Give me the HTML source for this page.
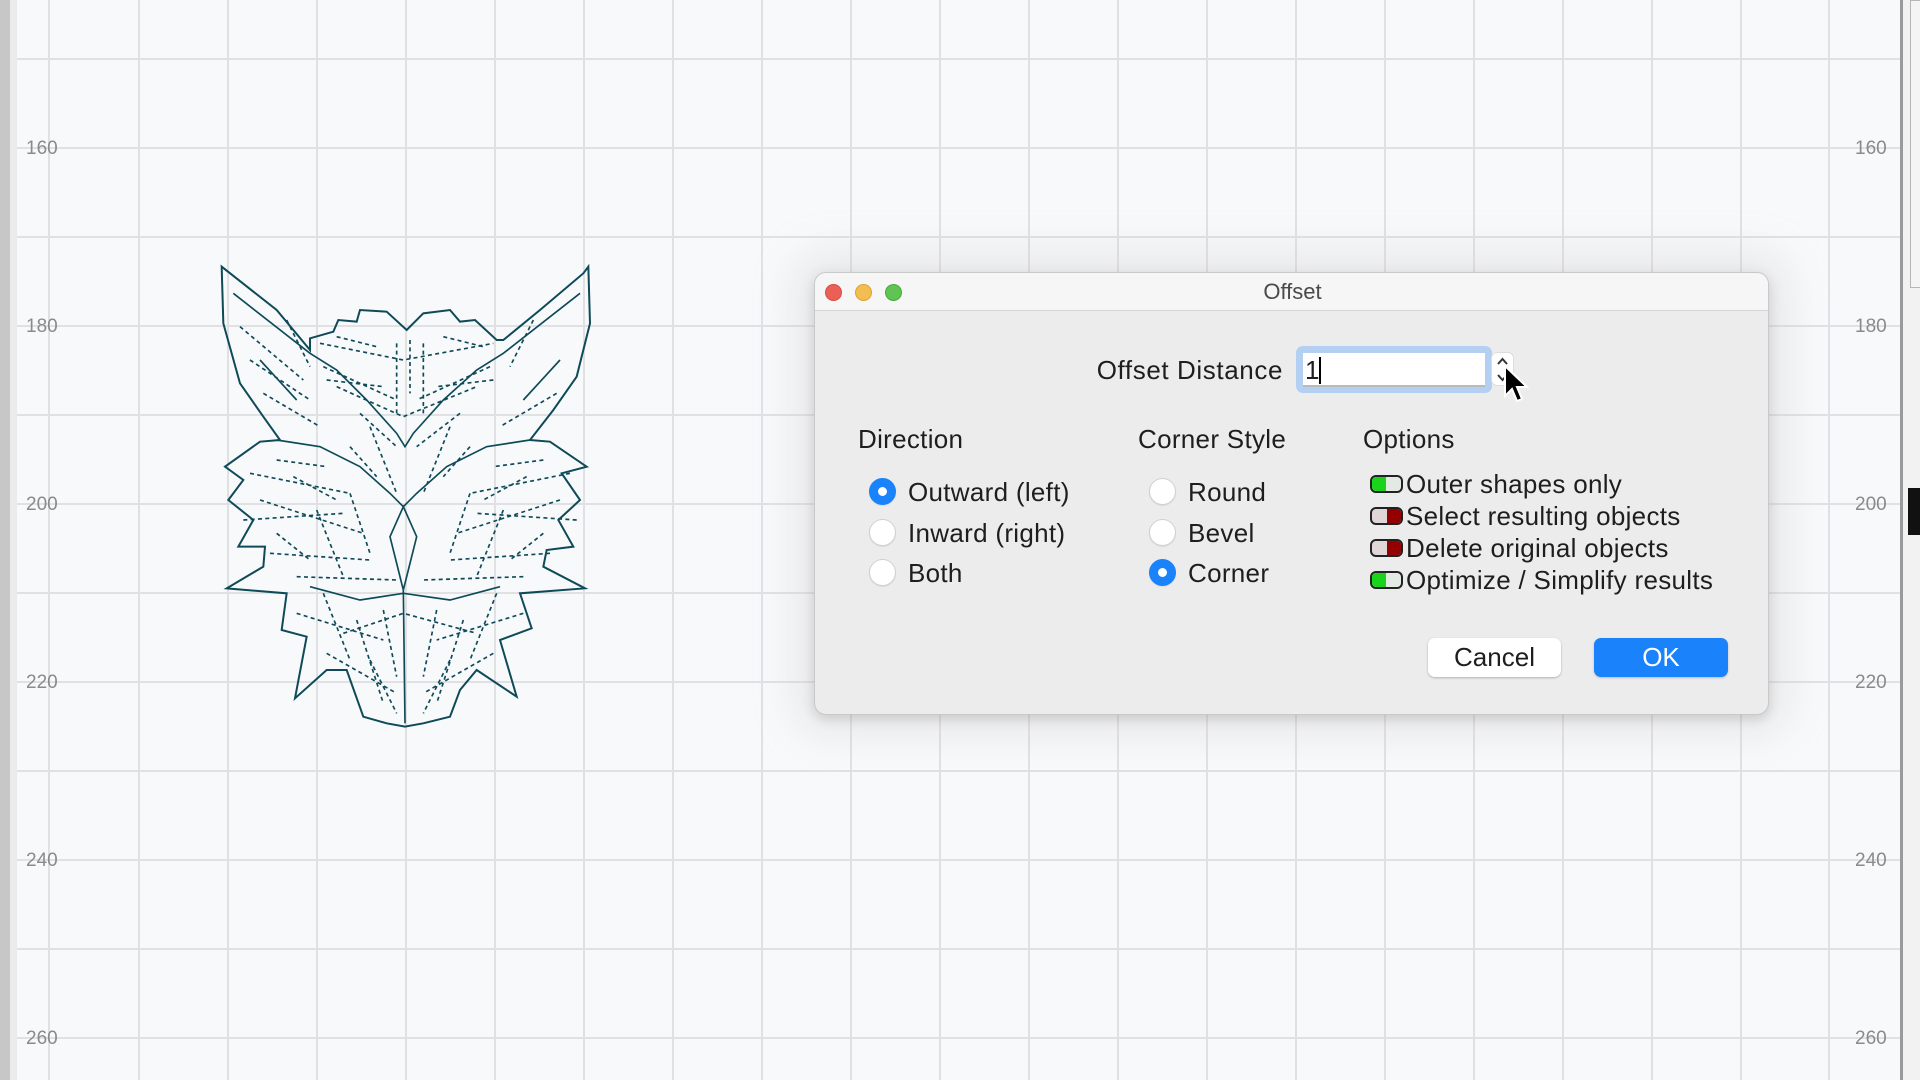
<!DOCTYPE html>
<html><head><meta charset="utf-8"><style>
*{margin:0;padding:0;box-sizing:border-box}
body{width:1920px;height:1080px;overflow:hidden;background:#f8f9fb;font-family:"Liberation Sans",sans-serif;position:relative}
.lbl{position:absolute;font-size:19px;color:#8a8a8a}
.abs{position:absolute}
.dlg{position:absolute;left:814px;top:272px;width:955px;height:443px;background:#ececec;border-radius:12px;border:1px solid #c9c9c9;box-shadow:0 0 40px 18px rgba(200,200,200,.35),0 4px 12px rgba(0,0,0,.18);overflow:hidden}
.tb{height:38px;background:#f6f6f6;border-bottom:1px solid #d4d4d4;position:relative}
.tl{position:absolute;top:11px;width:17px;height:17px;border-radius:50%}
.t{font-size:26px;color:#1e1e1e;letter-spacing:0.6px}
.h{font-size:26px;color:#1e1e1e;letter-spacing:0.3px}
.radio{position:absolute;width:27px;height:27px;border-radius:50%;background:#fff;border:1px solid #d0d0d0;box-shadow:0 1px 1px rgba(0,0,0,.08)}
.radio.on{background:#1a82fb;border-color:#1a82fb}
.radio.on:after{content:"";position:absolute;left:8px;top:8px;width:9px;height:9px;border-radius:50%;background:#fff}
.tog{position:absolute;width:33px;height:18px;border:2px solid #222;border-radius:6px;overflow:hidden;background:#e3e9e3}
.tog i{position:absolute;top:0;width:14px;height:14px}
.btn{position:absolute;top:638px;height:39px;border-radius:7px;font-size:26px;text-align:center;line-height:39px}
</style></head><body>
<div class="abs" style="left:0;top:0;width:10px;height:1080px;background:#c7c7c7"></div>
<div class="abs" style="left:10px;top:0;width:7px;height:1080px;background:#ebebeb"></div>
<svg class="abs" style="left:0;top:0" width="1920" height="1080">
<g stroke="#e1e1e4" stroke-width="2">
<line x1="49" y1="0" x2="49" y2="1080"/><line x1="139" y1="0" x2="139" y2="1080"/><line x1="228" y1="0" x2="228" y2="1080"/><line x1="317" y1="0" x2="317" y2="1080"/><line x1="406" y1="0" x2="406" y2="1080"/><line x1="495" y1="0" x2="495" y2="1080"/><line x1="584" y1="0" x2="584" y2="1080"/><line x1="673" y1="0" x2="673" y2="1080"/><line x1="762" y1="0" x2="762" y2="1080"/><line x1="851" y1="0" x2="851" y2="1080"/><line x1="940" y1="0" x2="940" y2="1080"/><line x1="1029" y1="0" x2="1029" y2="1080"/><line x1="1118" y1="0" x2="1118" y2="1080"/><line x1="1207" y1="0" x2="1207" y2="1080"/><line x1="1296" y1="0" x2="1296" y2="1080"/><line x1="1385" y1="0" x2="1385" y2="1080"/><line x1="1474" y1="0" x2="1474" y2="1080"/><line x1="1563" y1="0" x2="1563" y2="1080"/><line x1="1652" y1="0" x2="1652" y2="1080"/><line x1="1741" y1="0" x2="1741" y2="1080"/><line x1="1829" y1="0" x2="1829" y2="1080"/>
<line x1="17" y1="59" x2="1900" y2="59"/><line x1="17" y1="148" x2="1900" y2="148"/><line x1="17" y1="237" x2="1900" y2="237"/><line x1="17" y1="326" x2="1900" y2="326"/><line x1="17" y1="415" x2="1900" y2="415"/><line x1="17" y1="504" x2="1900" y2="504"/><line x1="17" y1="593" x2="1900" y2="593"/><line x1="17" y1="682" x2="1900" y2="682"/><line x1="17" y1="771" x2="1900" y2="771"/><line x1="17" y1="860" x2="1900" y2="860"/><line x1="17" y1="949" x2="1900" y2="949"/><line x1="17" y1="1038" x2="1900" y2="1038"/>
</g></svg>
<div class="lbl" style="left:26px;top:138px">160</div><div class="lbl" style="left:26px;top:316px">180</div><div class="lbl" style="left:26px;top:494px">200</div><div class="lbl" style="left:26px;top:672px">220</div><div class="lbl" style="left:26px;top:850px">240</div><div class="lbl" style="left:26px;top:1028px">260</div>
<div class="lbl" style="left:1855px;top:138px">160</div><div class="lbl" style="left:1855px;top:316px">180</div><div class="lbl" style="left:1855px;top:494px">200</div><div class="lbl" style="left:1855px;top:672px">220</div><div class="lbl" style="left:1855px;top:850px">240</div><div class="lbl" style="left:1855px;top:1028px">260</div>
<div class="abs" style="left:1900px;top:0;width:3px;height:1080px;background:#9a9a9a"></div>
<div class="abs" style="left:1903px;top:0;width:17px;height:1080px;background:#f2f2f2"></div>
<div class="abs" style="left:1910px;top:0;width:12px;height:288px;border:1px solid #b5b5b5;background:#f4f4f4"></div>
<div class="abs" style="left:1908px;top:488px;width:12px;height:47px;background:#111"></div>

<svg class="abs" style="left:210px;top:260px" width="400" height="480" viewBox="0 0 1200 1440" fill="none" stroke="#0e4a58" stroke-width="6" stroke-linejoin="miter">
<path d="M35 20 L40 190 L90 370 L160 470 L210 540 L150 545 L45 620 L100 660 L55 720 L130 780 L85 860 L165 860 L160 920 L50 985 L230 1000 L215 1110 L290 1130 L255 1315 L350 1230 L410 1230 L460 1370 L530 1390 L585 1400 L640 1390 L720 1370 L750 1290 L800 1230 L920 1310 L870 1140 L965 1105 L930 1000 L1125 985 L1000 920 L1010 870 L1090 860 L1045 780 L1110 720 L1055 640 L1130 620 L1020 545 L960 540 L1030 450 L1100 350 L1140 190 L1135 20 L1120 40 L990 150 L880 240 L860 240 L795 180 L750 185 L720 150 L640 160 L590 210 L530 155 L450 150 L440 185 L385 180 L370 215 L300 235 L300 270 L200 150 Z"/>
<path d="M70 100 L300 280 L380 330 L470 420 L560 520 L585 560 L610 520 L700 420 L800 330 L880 280 L1110 100 M200 540 L330 560 L450 620 L540 700 L580 740 L620 700 L710 620 L830 560 L960 540 M580 740 L540 830 L580 990 L620 830 Z M580 990 L585 1390 M300 980 L450 1020 L580 1000 L720 1020 L870 980 M150 300 L260 420 M1050 300 L940 420" stroke-width="5"/>
<path stroke-width="5" stroke-dasharray="12 10" d="M90 200 L280 360 M120 300 L300 420 M330 250 L580 300 L850 250 M340 320 L560 420 M840 320 L620 420 M380 380 L580 470 L800 380 M450 460 L560 560 M750 460 L620 560 M120 640 L420 700 M1080 640 L780 700 M150 720 L460 820 M1050 720 L740 820 M180 880 L480 900 M1020 880 L720 900 M320 750 L400 950 M880 750 L800 950 M260 1060 L520 1140 M940 1060 L680 1140 M350 1180 L560 1300 M850 1180 L640 1300 M440 1080 L520 1330 M760 1080 L680 1330 M600 240 L600 400 M560 250 L560 460 M640 250 L640 460 M230 180 L300 320 M970 180 L900 320 M200 600 L350 620 M1000 600 L850 620 M420 560 L500 650 M780 560 L700 650 M260 950 L560 960 M940 950 L640 960 M700 230 L820 260 M380 230 L500 260 M400 1120 L580 1060 L800 1120 M160 400 L330 500 M1040 400 L870 500 M350 360 L520 380 M850 360 L680 380 M480 500 L560 700 M720 500 L640 700 M100 780 L400 760 M1100 780 L800 760 M200 820 L300 900 M1000 820 L900 900 M420 700 L480 880 M780 700 L720 880 M340 1000 L420 1200 M860 1000 L780 1200 M480 1200 L560 1360 M720 1200 L640 1360 M520 1050 L560 1250 M680 1050 L640 1250 M250 650 L380 720 M950 650 L820 720"/>
</svg>

<div class="dlg">
<div class="tb">
<div class="tl" style="left:10px;background:#ec5f57;border:1px solid #d44d45"></div>
<div class="tl" style="left:40px;background:#f3bd4f;border:1px solid #d9a23c"></div>
<div class="tl" style="left:70px;background:#5fc454;border:1px solid #4aa83f"></div>
<div class="abs" style="left:0;width:955px;top:6px;text-align:center;font-size:22px;color:#4a4a4a">Offset</div>
</div>
</div>
<div class="abs t" style="left:1043px;top:355px;width:240px;text-align:right">Offset Distance</div>
<div class="abs" style="left:1296px;top:346px;width:196px;height:47px;border-radius:7px;background:#b3d0f3"></div>
<div class="abs" style="left:1303px;top:353px;width:182px;height:34px;background:#fff;border-bottom:2px solid #bbb"></div>
<div class="abs t" style="left:1305px;top:355px">1</div>
<div class="abs" style="left:1319px;top:357px;width:2px;height:27px;background:#000"></div>
<div class="abs" style="left:1491px;top:352px;width:23px;height:34px;background:#fff;border-radius:6px;border:1px solid #ddd"></div>
<svg class="abs" style="left:1491px;top:352px" width="23" height="34"><path d="M7 12 L11.5 7 L16 12 M7 23 L11.5 28 L16 23" stroke="#333" stroke-width="2" fill="none"/></svg>
<svg class="abs" style="left:1503px;top:364px" width="32" height="44"><path d="M2 2 L2 32 L9 25 L14 37 L19 35 L14 23 L24 23 Z" fill="#000" stroke="#fff" stroke-width="2"/></svg>

<div class="abs h" style="left:858px;top:424px">Direction</div>
<div class="abs h" style="left:1138px;top:424px">Corner Style</div>
<div class="abs h" style="left:1363px;top:424px">Options</div>

<div class="radio on" style="left:869px;top:478px"></div><div class="abs h" style="left:908px;top:477px">Outward (left)</div>
<div class="radio" style="left:869px;top:519px"></div><div class="abs h" style="left:908px;top:518px">Inward (right)</div>
<div class="radio" style="left:869px;top:559px"></div><div class="abs h" style="left:908px;top:558px">Both</div>
<div class="radio" style="left:1149px;top:478px"></div><div class="abs h" style="left:1188px;top:477px">Round</div>
<div class="radio" style="left:1149px;top:519px"></div><div class="abs h" style="left:1188px;top:518px">Bevel</div>
<div class="radio on" style="left:1149px;top:559px"></div><div class="abs h" style="left:1188px;top:558px">Corner</div>

<div class="tog" style="left:1370px;top:475px"><i style="left:0;background:#19d41b"></i></div><div class="abs h" style="left:1406px;top:469px">Outer shapes only</div>
<div class="tog" style="left:1370px;top:507px;background:#e0d6d8"><i style="right:0;background:#940000"></i></div><div class="abs h" style="left:1406px;top:501px">Select resulting objects</div>
<div class="tog" style="left:1370px;top:539px;background:#e0d6d8"><i style="right:0;background:#940000"></i></div><div class="abs h" style="left:1406px;top:533px">Delete original objects</div>
<div class="tog" style="left:1370px;top:571px"><i style="left:0;background:#19d41b"></i></div><div class="abs h" style="left:1406px;top:565px">Optimize / Simplify results</div>

<div class="btn" style="left:1428px;width:133px;background:#fff;color:#1e1e1e;box-shadow:0 1px 2px rgba(0,0,0,.25)">Cancel</div>
<div class="btn" style="left:1594px;width:134px;background:#1a82fb;color:#fff;box-shadow:0 1px 2px rgba(0,0,0,.2)">OK</div>
</body></html>
